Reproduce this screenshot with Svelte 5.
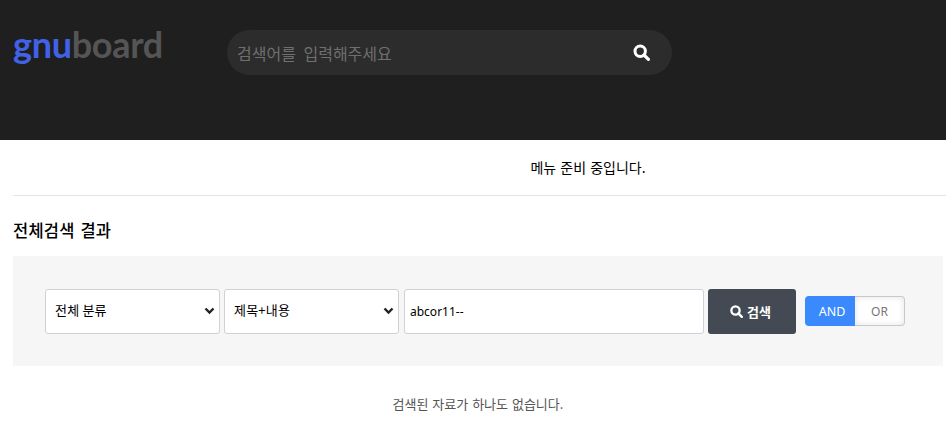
<script lang="ts">
	let keyword = $state('abcor11--');
	let mode = $state('and');
</script>

<header class="top">
	<a class="logo" href="#top"><span class="blue">gnu</span>board</a>
	<form class="top-search" onsubmit={(e) => e.preventDefault()}>
		<input type="text" placeholder="검색어를 입력해주세요" />
		<button type="submit" aria-label="검색">
			<svg width="17" height="17" viewBox="0 0 17 17">
				<circle cx="7.2" cy="7.2" r="5.2" fill="none" stroke="#fff" stroke-width="3" />
				<path d="M11 11l4.4 4.4" stroke="#fff" stroke-width="3.2" stroke-linecap="round" />
			</svg>
		</button>
	</form>
</header>

<nav class="menu">메뉴 준비 중입니다.</nav>

<main>
	<h2>전체검색 결과</h2>
	<form class="search-box" onsubmit={(e) => e.preventDefault()}>
		<select class="cat">
			<option>전체 분류</option>
		</select>
		<select class="field">
			<option>제목+내용</option>
		</select>
		<input class="word" type="text" bind:value={keyword} />
		<button class="go" type="submit">
			<svg width="13" height="13" viewBox="0 0 17 17">
				<circle cx="7.2" cy="7.2" r="5.4" fill="none" stroke="#fff" stroke-width="3" />
				<path d="M11 11l4.4 4.4" stroke="#fff" stroke-width="3.2" stroke-linecap="round" />
			</svg>
			검색
		</button>
		<div class="toggle">
			<button type="button" class:on={mode === 'and'} onclick={() => (mode = 'and')}>AND</button>
			<button type="button" class:on={mode === 'or'} onclick={() => (mode = 'or')}>OR</button>
		</div>
	</form>
	<p class="empty">검색된 자료가 하나도 없습니다.</p>
</main>

<style>
	:global(body) {
		background: #fff;
		color: #000;
		font-family: "Noto Sans CJK KR", "Liberation Sans", sans-serif;
		font-size: 13px;
		overflow: hidden;
	}

	.top {
		display: flex;
		align-items: flex-start;
		height: 140px;
		background: #1f1f1f;
		box-sizing: border-box;
		padding: 30px 0 0 13px;
	}

	.logo {
		width: 214px;
		height: 36px;
		font-family: "Lato", sans-serif;
		font-size: 36px;
		font-weight: 700;
		line-height: 28px;
		letter-spacing: -0.3px;
		color: #555;
		text-decoration: none;
	}

	.blue {
		color: #4162e6;
	}

	.top-search {
		display: flex;
		align-items: center;
		width: 445px;
		height: 45px;
		background: #2c2c2c;
		border-radius: 23px;
		box-sizing: border-box;
		padding: 0 22px 0 10px;
	}

	.top-search input {
		flex: 1;
		min-width: 0;
		padding: 0;
		background: none;
		border: 0;
		outline: 0;
		color: #fff;
		font: 16px "Noto Sans CJK KR", sans-serif;
		word-spacing: 4px;
	}

	.top-search input::placeholder {
		color: #6f6f6f;
	}

	.top-search button {
		display: flex;
		padding: 0;
		background: none;
		border: 0;
	}

	.menu {
		height: 55px;
		line-height: 54px;
		margin-left: 13px;
		border-bottom: 1px solid #e2e2e2;
		text-align: center;
		padding-left: 217px;
		font-size: 14px;
		word-spacing: 1px;
	}

	main {
		margin: 0 3px 0 13px;
	}

	h2 {
		margin: 0;
		padding-top: 22px;
		height: 38px;
		font-size: 16.5px;
		font-weight: 500;
		line-height: 24px;
		word-spacing: 2px;
		letter-spacing: 0.2px;
	}

	.search-box {
		display: flex;
		align-items: center;
		height: 110px;
		background: #f6f6f6;
		box-sizing: border-box;
		padding: 0 32px;
	}

	select,
	.word {
		height: 45px;
		box-sizing: border-box;
		background: #fff;
		border: 1px solid #d0d0d8;
		border-radius: 3px;
		color: #000;
		font: 13px/20px "Noto Sans CJK KR", sans-serif;
	}

	select {
		appearance: none;
		width: 175px;
		padding: 0 20px 2px 9px;
		margin-right: 4px;
		background: #fff url("data:image/svg+xml,%3Csvg xmlns='http://www.w3.org/2000/svg' width='11' height='8' viewBox='0 0 11 8'%3E%3Cpath d='M1.5 1.5l4 4 4-4' fill='none' stroke='%23222' stroke-width='2.4'/%3E%3C/svg%3E") no-repeat right 4px center;
		letter-spacing: 0.2px;
	}

	.word {
		width: 300px;
		padding: 0 5px;
		font: 12px "Noto Sans", sans-serif;
		margin: 0 4px 0 1px;
		outline: 0;
	}

	.go {
		display: flex;
		align-items: center;
		justify-content: center;
		gap: 4px;
		width: 88px;
		height: 45px;
		padding: 0 3px 0 0;
		background: #434a54;
		border: 0;
		border-radius: 3px;
		color: #fff;
		font: 700 13px "Noto Sans CJK KR", sans-serif;
		margin-right: 9px;
	}

	.toggle {
		display: flex;
		width: 100px;
		height: 30px;
	}

	.toggle button {
		width: 50px;
		padding: 0;
		background: #fff;
		border: 1px solid #c6c9d0;
		border-left: 0;
		border-radius: 0 4px 4px 0;
		box-shadow: inset 0 0 6px #e4e4e4;
		color: #777;
		font: 12px "Noto Sans", sans-serif;
	}

	.toggle button.on {
		padding-left: 4px;
		background: #3a8afd;
		border: 0;
		border-radius: 4px 0 0 4px;
		box-shadow: none;
		color: #fff;
		font-size: 12.5px;
	}

	.empty {
		margin: 0;
		padding-top: 29px;
		text-align: center;
		font-size: 13px;
		line-height: 18px;
		color: #555;
		word-spacing: 1px;
	}
</style>
